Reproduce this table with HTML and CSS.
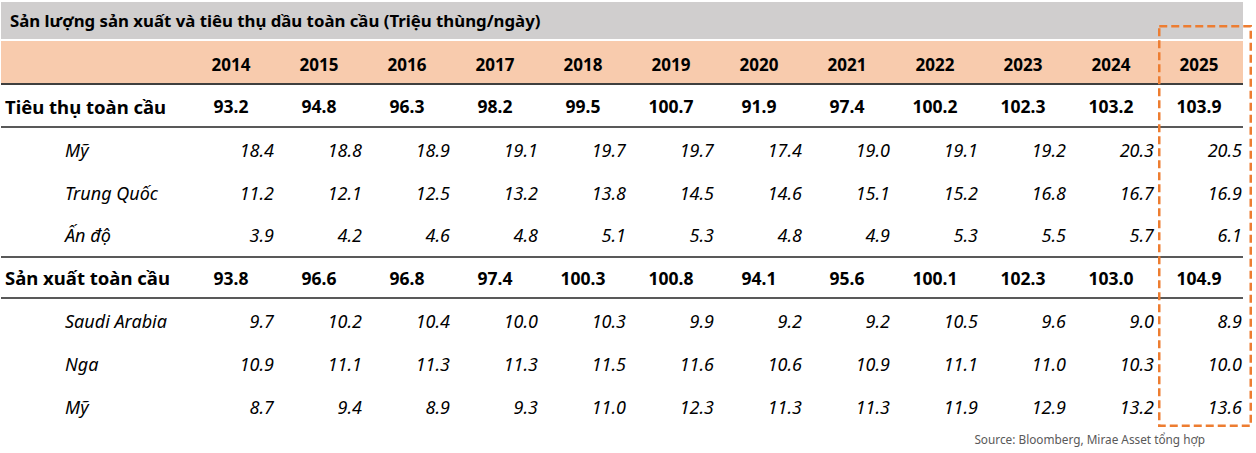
FILE: index.html
```html
<!DOCTYPE html>
<html lang="vi">
<head>
<meta charset="utf-8">
<link rel="stylesheet" href="styles.css">
</head>
<body>
<div class="page">
  <div class="title">Sản lượng sản xuất và tiêu thụ dầu toàn cầu (Triệu thùng/ngày)</div>
  <div class="row head">
    <div class="label"></div>
    <div>2014</div><div>2015</div><div>2016</div><div>2017</div><div>2018</div><div>2019</div>
    <div>2020</div><div>2021</div><div>2022</div><div>2023</div><div>2024</div><div>2025</div>
  </div>
  <div class="row total r1">
    <div class="label">Tiêu thụ toàn cầu</div>
    <div>93.2</div><div>94.8</div><div>96.3</div><div>98.2</div><div>99.5</div><div>100.7</div>
    <div>91.9</div><div>97.4</div><div>100.2</div><div>102.3</div><div>103.2</div><div>103.9</div>
  </div>
  <div class="row sub">
    <div class="label">Mỹ</div>
    <div>18.4</div><div>18.8</div><div>18.9</div><div>19.1</div><div>19.7</div><div>19.7</div>
    <div>17.4</div><div>19.0</div><div>19.1</div><div>19.2</div><div>20.3</div><div>20.5</div>
  </div>
  <div class="row sub">
    <div class="label">Trung Quốc</div>
    <div>11.2</div><div>12.1</div><div>12.5</div><div>13.2</div><div>13.8</div><div>14.5</div>
    <div>14.6</div><div>15.1</div><div>15.2</div><div>16.8</div><div>16.7</div><div>16.9</div>
  </div>
  <div class="row sub last">
    <div class="label">Ấn độ</div>
    <div>3.9</div><div>4.2</div><div>4.6</div><div>4.8</div><div>5.1</div><div>5.3</div>
    <div>4.8</div><div>4.9</div><div>5.3</div><div>5.5</div><div>5.7</div><div>6.1</div>
  </div>
  <div class="row total r2">
    <div class="label">Sản xuất toàn cầu</div>
    <div>93.8</div><div>96.6</div><div>96.8</div><div>97.4</div><div>100.3</div><div>100.8</div>
    <div>94.1</div><div>95.6</div><div>100.1</div><div>102.3</div><div>103.0</div><div>104.9</div>
  </div>
  <div class="row sub">
    <div class="label">Saudi Arabia</div>
    <div>9.7</div><div>10.2</div><div>10.4</div><div>10.0</div><div>10.3</div><div>9.9</div>
    <div>9.2</div><div>9.2</div><div>10.5</div><div>9.6</div><div>9.0</div><div>8.9</div>
  </div>
  <div class="row sub">
    <div class="label">Nga</div>
    <div>10.9</div><div>11.1</div><div>11.3</div><div>11.3</div><div>11.5</div><div>11.6</div>
    <div>10.6</div><div>10.9</div><div>11.1</div><div>11.0</div><div>10.3</div><div>10.0</div>
  </div>
  <div class="row sub">
    <div class="label">Mỹ</div>
    <div>8.7</div><div>9.4</div><div>8.9</div><div>9.3</div><div>11.0</div><div>12.3</div>
    <div>11.3</div><div>11.3</div><div>11.9</div><div>12.9</div><div>13.2</div><div>13.6</div>
  </div>
  <div class="source">Source: Bloomberg, Mirae Asset tổng hợp</div>
  <svg class="highlight" width="94" height="402" viewBox="0 0 94 402">
    <rect x="1.25" y="1.25" width="91.5" height="399.5" fill="none" stroke="#ed7d31" stroke-width="2.5" stroke-dasharray="8 4"/>
  </svg>
</div>
</body>
</html>
```
FILE: styles.css
```css
* { box-sizing: border-box; }
html, body { margin: 0; padding: 0; background: #fff; }
body {
  font-family: "Noto Sans", "Open Sans", sans-serif;
  color: #000;
  width: 1256px;
  height: 453px;
  overflow: hidden;
}
.page {
  position: relative;
  padding: 2px 0 0 1px;
  width: 1256px;
}
.title {
  width: 1242px;
  height: 37px;
  background: #d0cece;
  font-weight: 700;
  font-size: 16.8px;
  padding-left: 9px;
  display: flex;
  align-items: center;
  margin-bottom: 2px;
}
.row {
  display: grid;
  grid-template-columns: 186px repeat(12, 88px);
  width: 1242px;
  align-items: center;
}
.head {
  height: 44px;
  padding-top: 4px;
  background: #f8cbad;
  border-bottom: 2px solid #3f3f3f;
  font-weight: 700;
  font-size: 17px;
  text-align: center;
}
.total {
  font-weight: 700;
  font-size: 17.5px;
  text-align: center;
  border-bottom: 2px solid #595959;
}
.r1 { height: 43px; padding-top: 1px; }
.r2 { height: 41px; }
.total .label { text-align: left; padding-left: 4px; font-size: 18.5px; }
.sub {
  height: 43px;
  font-style: italic;
  font-size: 18px;
  text-align: right;
}
.sub.last { height: 44px; border-bottom: 2px solid #595959; }
.sub > div { padding-right: 1px; }
.sub .label { text-align: left; padding-left: 64px; }
.source {
  width: 1204px;
  text-align: right;
  font-size: 11.8px;
  color: #595959;
  padding-top: 3px;
}
.highlight {
  position: absolute;
  left: 1158px;
  top: 25px;
}
```
